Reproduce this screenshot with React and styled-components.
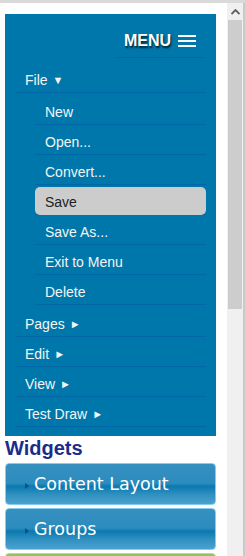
import styled, { createGlobalStyle } from "styled-components";

const Global = createGlobalStyle`
  html, body {
    margin: 0;
    padding: 0;
    background: #ffffff;
    overflow: hidden;
  }
  body {
    font-family: "Liberation Sans", Arial, sans-serif;
  }
`;

const Frame = styled.div`
  display: flex;
  width: 245px;
  height: 556px;
  border-top: 3px solid #d9d9d9;
  box-sizing: border-box;
  overflow: hidden;
`;

const Page = styled.div`
  width: 222px;
  padding: 11px 0 0 5px;
  flex: none;
`;

const Panel = styled.nav`
  width: 211px;
  background: #0077aa;
  padding-bottom: 9px;
`;

const Header = styled.div`
  display: flex;
  justify-content: flex-end;
  padding-right: 12px;
`;

const MenuButton = styled.div`
  display: flex;
  align-items: center;
  justify-content: flex-end;
  gap: 7px;
  width: 80px;
  height: 32px;
  padding: 11px 8px 0 0;
  border-bottom: 1px solid #0366a6;
  color: #ffffff;
  font-size: 16px;
  font-weight: bold;
  text-shadow: 1px 2px 2px rgba(0, 0, 0, 0.75);
`;

const List = styled.ul`
  list-style: none;
  margin: 5px 10px 0 10px;
  padding: 0;
`;

const Item = styled.li`
  border-bottom: 1px solid #0366a6;
`;

const Label = styled.div`
  height: 29px;
  display: flex;
  align-items: center;
  padding: 4px 0 0 10px;
  box-sizing: border-box;
  font-size: 14px;
  color: #f4f4f4;
`;

const Arrow = styled.span`
  font-size: 11px;
  margin-left: 5px;
  padding-top: 1px;
`;

const SubList = styled.ul`
  list-style: none;
  margin: 0 0 0 20px;
  padding: 2px 0;
`;

const SubItem = styled.li`
  border-bottom: 1px solid #0366a6;
`;

const SubLabel = styled.div`
  display: flex;
  align-items: center;
  padding: 4px 0 0 10px;
  box-sizing: border-box;
  font-size: 14px;
  color: ${(p) => (p.$active ? "#222222" : "#f4f4f4")};
  background: ${(p) => (p.$active ? "#cccccc" : "transparent")};
  border-radius: ${(p) => (p.$active ? "5px" : "0")};
  margin-top: ${(p) => (p.$active ? "2px" : "0")};
  height: ${(p) => (p.$active ? "28px" : "29px")};
  margin-bottom: ${(p) => (p.$active ? "-1px" : "0")};
  padding-top: ${(p) => (p.$active ? "2px" : "4px")};
`;

const Heading = styled.h2`
  margin: 2px 0 5px 0;
  font-size: 20px;
  line-height: 20px;
  font-weight: bold;
  color: #1a2d8c;
`;

const Accordion = styled.div`
  display: flex;
  flex-direction: column;
  gap: 3px;
`;

const Bar = styled.div`
  width: 211px;
  height: 42px;
  box-sizing: border-box;
  border: 1px solid ${(p) => (p.$green ? "#b7dc8c" : "#86ccef")};
  border-radius: 4px;
  display: flex;
  align-items: center;
  padding-left: 19px;
  gap: 5px;
  color: #ffffff;
  font-family: "DejaVu Sans", Verdana, sans-serif;
  font-size: 17.5px;
  background: ${(p) =>
    p.$green
      ? "linear-gradient(#93c55a, #7db544 50%, #8cc152)"
      : "linear-gradient(#3690c0 0%, #2c8cbe 48%, #0a79b0 56%, #2e8fc0 75%, #4aa2cf 100%)"};
`;

const Tri = styled.span`
  width: 0;
  height: 0;
  border-top: 3px solid transparent;
  border-bottom: 3px solid transparent;
  border-left: 4px solid #0d4f86;
  margin-top: 3px;
`;

const Scrollbar = styled.div`
  width: 18px;
  flex: none;
  background: #f0f0f0;
  border-right: 2px solid #c9c9c9;
  box-sizing: border-box;
  display: flex;
  flex-direction: column;
  align-items: stretch;
`;

const ScrollArrow = styled.div`
  height: 17px;
  display: flex;
  align-items: center;
  justify-content: center;
`;

const Thumb = styled.div`
  height: 289px;
  margin: 0 1px;
  background: #cdcdcd;
`;

const Hamburger = () => (
  <svg width="18" height="14" viewBox="0 0 18 14">
    <rect x="0" y="1" width="18" height="2" fill="#fff" />
    <rect x="0" y="6" width="18" height="2" fill="#fff" />
    <rect x="0" y="11" width="18" height="2" fill="#fff" />
  </svg>
);

const subItems = ["New", "Open...", "Convert...", "Save", "Save As...", "Exit to Menu", "Delete"];
const topItems = ["Pages", "Edit", "View", "Test Draw"];

export default function App() {
  return (
    <>
      <Global />
      <Frame>
        <Page>
          <Panel>
            <Header>
              <MenuButton>
                <span>MENU</span>
                <Hamburger />
              </MenuButton>
            </Header>
            <List>
              <Item>
                <Label>
                  File<Arrow>▼</Arrow>
                </Label>
              </Item>
              <SubList>
                {subItems.map((s) => (
                  <SubItem key={s}>
                    <SubLabel $active={s === "Save"}>{s}</SubLabel>
                  </SubItem>
                ))}
              </SubList>
              {topItems.map((t) => (
                <Item key={t}>
                  <Label>
                    {t}
                    <Arrow>►</Arrow>
                  </Label>
                </Item>
              ))}
            </List>
          </Panel>
          <Heading>Widgets</Heading>
          <Accordion>
            <Bar>
              <Tri />
              Content Layout
            </Bar>
            <Bar>
              <Tri />
              Groups
            </Bar>
            <Bar $green />
          </Accordion>
        </Page>
        <Scrollbar>
          <ScrollArrow>
            <svg width="9" height="6" viewBox="0 0 9 6">
              <path d="M0.5 5 L4.5 1 L8.5 5" stroke="#5f5f5f" strokeWidth="1.8" fill="none" />
            </svg>
          </ScrollArrow>
          <Thumb />
        </Scrollbar>
      </Frame>
    </>
  );
}
